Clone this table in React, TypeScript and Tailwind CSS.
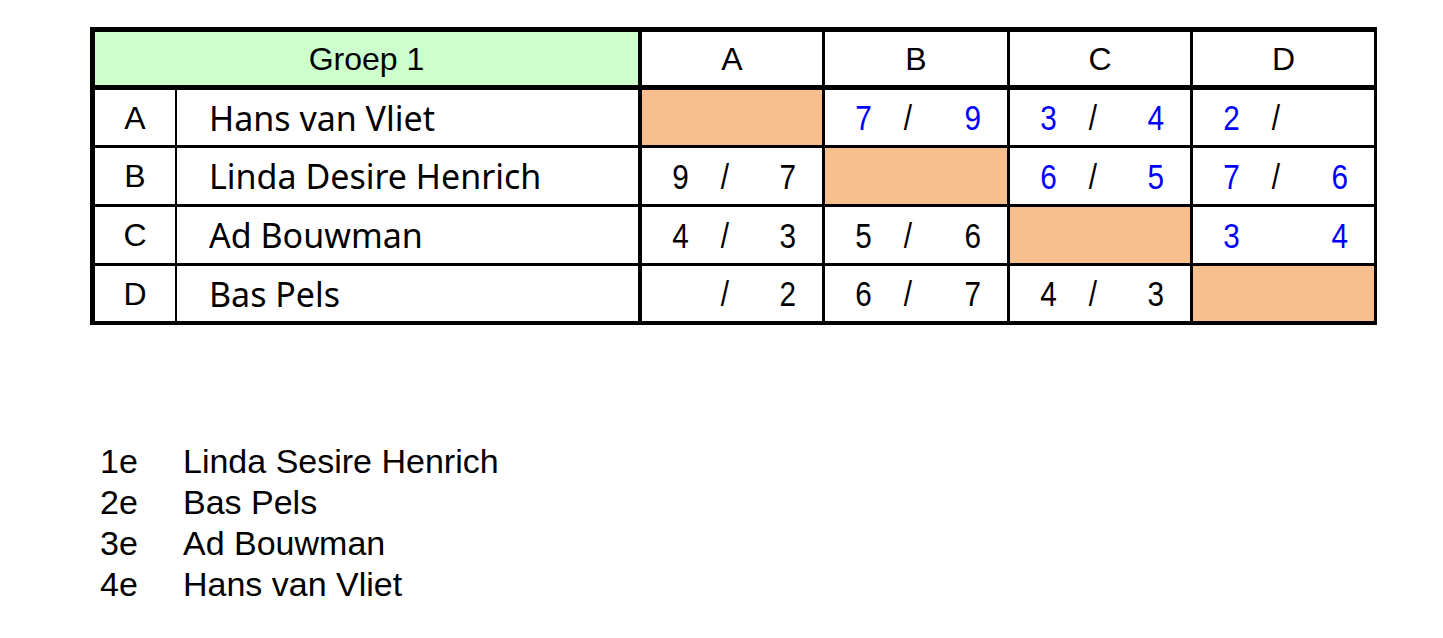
import React from "react";

const ARIAL = "font-['Liberation_Sans',Arial,sans-serif]";
const COMIC = "font-['Comic_Sans_MS','Noto_Sans',sans-serif]";

type Score = { l?: string; r?: string; slash?: boolean; blue?: boolean } | null;

const players = [
  { key: "A", name: "Hans van Vliet", h: "h-[58px] border-b-[3px]" },
  { key: "B", name: "Linda Desire Henrich", h: "h-[59px] border-b-[3px]" },
  { key: "C", name: "Ad Bouwman", h: "h-[59px] border-b-[3px]" },
  { key: "D", name: "Bas Pels", h: "h-[55px]" },
];

// null = own match (diagonal)
const scores: Score[][] = [
  [null, { l: "7", r: "9", slash: true, blue: true }, { l: "3", r: "4", slash: true, blue: true }, { l: "2", slash: true, blue: true }],
  [{ l: "9", r: "7", slash: true }, null, { l: "6", r: "5", slash: true, blue: true }, { l: "7", r: "6", slash: true, blue: true }],
  [{ l: "4", r: "3", slash: true }, { l: "5", r: "6", slash: true }, null, { l: "3", r: "4", blue: true }],
  [{ r: "2", slash: true }, { l: "6", r: "7", slash: true }, { l: "4", r: "3", slash: true }, null],
];

const colCls = [
  "w-[184px] border-l-4",
  "w-[185px] border-l-[3px]",
  "w-[183px] border-l-[3px]",
  "w-[184px] border-l-[3px]",
];

const ScoreCell = ({ s, cls }: { s: Score; cls: string }) => {
  if (!s) return <div className={`${cls} border-black bg-[#f8bf8e]`} />;
  return (
    <div
      className={`${cls} border-black flex items-center pl-[29px] pr-[25px] text-[35px] ${
        s.blue ? "text-[#0000ff]" : "text-black"
      }`}
    >
      <span className="w-[18px] inline-block scale-x-[0.85]">{s.l}</span>
      <span className="ml-[31px] w-[10px] inline-block scale-x-[0.85] text-black">{s.slash ? "/" : ""}</span>
      <span className="ml-auto inline-block scale-x-[0.85]">{s.r}</span>
    </div>
  );
};

export default function App() {
  return (
    <div className={`min-h-screen bg-white pl-[90px] pt-[27px] ${ARIAL}`}>
      <div className="w-[1287px] border-t-[5px] border-l-[5px] border-r-[3px] border-b-[4px] border-black text-[32px] leading-none">
        {/* header */}
        <div className="flex h-[58px] border-b-[5px] border-black">
          <div className="w-[543px] bg-[#ccffcc] flex items-center justify-center">Groep 1</div>
          {["A", "B", "C", "D"].map((k, i) => (
            <div key={k} className={`${colCls[i]} border-black flex items-center justify-center`}>
              {k}
            </div>
          ))}
        </div>

        {players.map((p, r) => (
          <div key={p.key} className={`flex ${p.h} border-black`}>
            <div className="w-[80px] flex items-center justify-center">{p.key}</div>
            <div className={`w-[463px] border-l-2 border-black flex items-center pl-[32px] text-[34px] ${COMIC}`}>
              {p.name}
            </div>
            {scores[r].map((s, c) => (
              <ScoreCell key={c} s={s} cls={colCls[c]} />
            ))}
          </div>
        ))}
      </div>

      <div className="mt-[116px] pl-[10px] text-[34px] leading-[41px] text-black">
        {[
          ["1e", "Linda Sesire Henrich"],
          ["2e", "Bas Pels"],
          ["3e", "Ad Bouwman"],
          ["4e", "Hans van Vliet"],
        ].map(([n, name]) => (
          <div key={n} className="flex">
            <span className="w-[83px]">{n}</span>
            <span>{name}</span>
          </div>
        ))}
      </div>
    </div>
  );
}
